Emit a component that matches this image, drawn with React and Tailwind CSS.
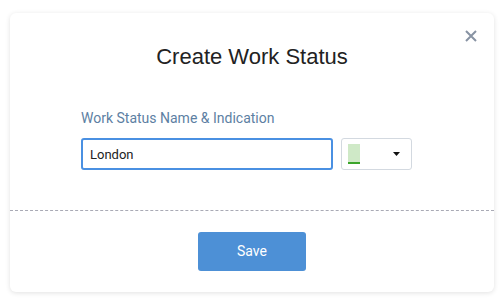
import { useState } from "react";

export default function App() {
  const [name, setName] = useState("London");

  return (
    <div className="min-h-screen bg-white p-[10px] pt-[13px] font-['Roboto',sans-serif]">
      <div className="relative w-[484px] h-[279px] bg-white rounded-[6px] shadow-[0_1px_5px_rgba(0,0,0,0.12)] flex flex-col">
        {/* Close */}
        <button className="absolute right-[17px] top-[17px] text-[#8893a3]">
          <svg width="12" height="12" viewBox="0 0 12 12">
            <path d="M1 1L11 11M11 1L1 11" stroke="currentColor" strokeWidth="2" />
          </svg>
        </button>

        {/* Header */}
        <h1 className="flex-none pt-[30px] text-center text-[22px] leading-[28px] text-[#222] font-['Liberation_Sans',Arial,sans-serif]">
          Create Work Status
        </h1>

        {/* Body */}
        <div className="flex-none px-[71px] pt-[39px] h-[139px]">
          <label className="block text-[14px] leading-[16px] text-[#5d7fa3]">
            Work Status Name &amp; Indication
          </label>
          <div className="flex gap-[8px] mt-[12px]">
            <input
              className="w-[252px] h-[32px] border-2 border-[#4a90e2] rounded-[3px] px-[7px] text-[13px] text-[#222] outline-none"
              value={name}
              onChange={e => setName(e.target.value)}
            />
            <button className="w-[71px] h-[32px] border border-[#d3d9e0] rounded-[3px] flex items-center pl-[6px] pr-[11px] justify-between">
              <span className="w-[12px] h-[20px] bg-[#cfe9c7] border-b-2 border-[#3ba52b]" />
              <svg width="7" height="4" viewBox="0 0 7 4">
                <path d="M0 0H7L3.5 4Z" fill="#111" />
              </svg>
            </button>
          </div>
        </div>

        {/* Footer */}
        <div className="flex-none border-t border-dashed border-[#a9aab5] flex justify-center pt-[21px]">
          <button className="w-[108px] h-[39px] rounded-[3px] bg-[#4d90d6] text-white text-[14px]">
            Save
          </button>
        </div>
      </div>
    </div>
  );
}
